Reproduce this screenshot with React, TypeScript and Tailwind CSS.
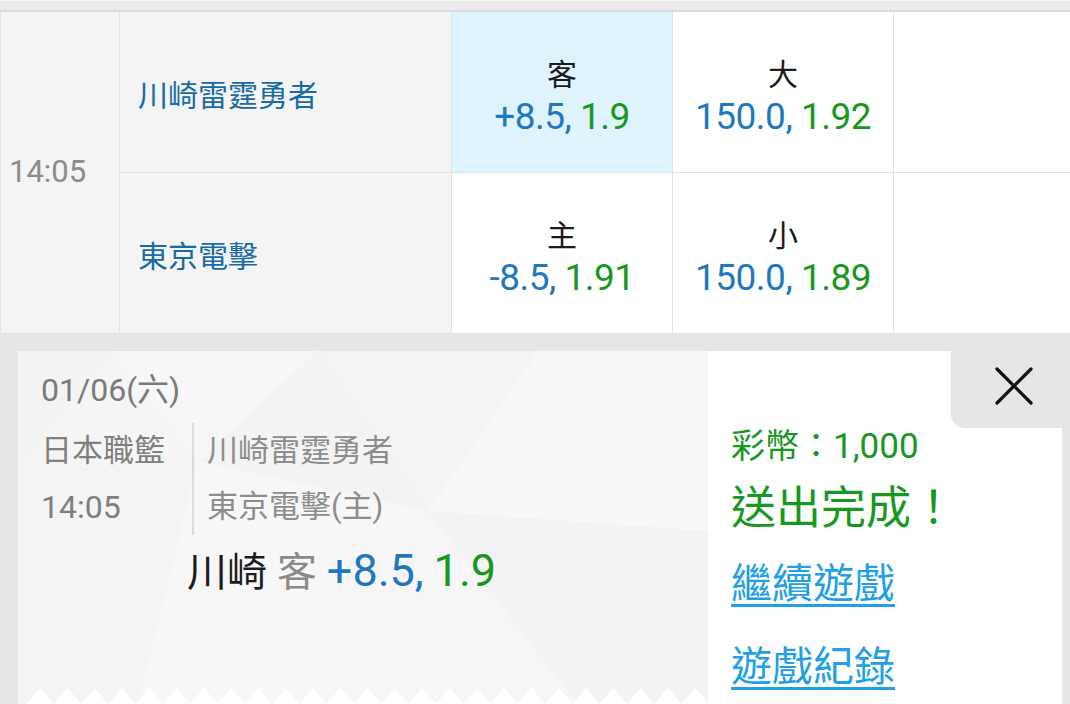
import React from 'react';

const FONT = "font-['Roboto','Noto_Sans_CJK_TC',sans-serif]";

function Odds({ label, line, price, active }: { label: string; line: string; price: string; active?: boolean }) {
    return (
        <div
            className={`flex flex-col items-center justify-center pt-[10px] border-r border-b border-[#dde3e7] ${
                active ? 'bg-[#dff3fc] border-[#c4dfee]' : 'bg-white'
            }`}
        >
            <div className="text-[30px] leading-[40px] text-[#1a1a1a]">{label}</div>
            <div className="text-[37px] leading-[44px] tracking-[-0.5px]">
                <span className="text-[#1f78bd]">{line},</span>{' '}
                <span className="text-[#18981f]">{price}</span>
            </div>
        </div>
    );
}

function LowPoly() {
    // faint triangle pattern behind the ticket
    return (
        <svg className="absolute inset-0" width="690" height="353" viewBox="0 0 690 353">
            <rect width="690" height="353" fill="#f5f5f5" />
            <polygon points="0,0 95,0 0,120" fill="#f3f3f3" />
            <polygon points="95,0 300,0 180,110" fill="#f7f7f7" />
            <polygon points="300,0 520,0 410,160" fill="#f4f4f4" />
            <polygon points="520,0 690,0 690,180" fill="#f6f6f6" />
            <polygon points="0,120 180,110 120,353 0,353" fill="#f4f4f4" />
            <polygon points="180,110 410,160 270,353 120,353" fill="#f7f7f7" />
            <polygon points="410,160 690,180 690,353 560,353" fill="#f3f3f3" />
            <polygon points="410,160 560,353 270,353" fill="#f6f6f6" />
            <polygon points="520,0 410,160 690,180" fill="#f8f8f8" />
            <polygon points="180,110 300,0 410,160" fill="#f2f2f2" opacity="0.6" />
        </svg>
    );
}

function Zigzag() {
    const pts: string[] = ['0,16'];
    const step = 27.3;
    for (let x = 8.4, i = 0; x < 700; x += step / 2, i++) {
        pts.push(`${x.toFixed(1)},${i % 2 === 0 ? 16 : 0}`);
    }
    pts.push('690,16');
    return (
        <svg className="absolute left-0 bottom-0" width="690" height="16" viewBox="0 0 690 16">
            <polygon points={pts.join(' ')} fill="#ffffff" />
        </svg>
    );
}

export default function App() {
    return (
        <div className={`w-[1070px] h-[704px] overflow-hidden bg-[#e6e6e6] ${FONT}`}>
            {/* top strip */}
            <div className="h-[12px] bg-[#ececec] border-t border-[#f6f6f6] border-b-2 border-b-[#d6dde3]" />

            {/* match rows */}
            <div className="grid grid-cols-[120px_332px_221px_221px_1fr] grid-rows-[161px_161px]">
                <div className="row-span-2 flex items-center pl-[8px] bg-[#f4f4f4] border-l border-r border-b border-[#dde3e7] text-[31px] text-[#8c8c8c]">
                    14:05
                </div>
                <div className="flex items-center pl-[18px] pt-[7px] bg-[#f4f4f4] border-r border-b border-[#dde3e7] text-[30px] text-[#196ba3]">
                    川崎雷霆勇者
                </div>
                <Odds label="客" line="+8.5" price="1.9" active />
                <Odds label="大" line="150.0" price="1.92" />
                <div className="bg-white border-b border-[#dde3e7]" />

                <div className="flex items-center pl-[18px] pt-[7px] bg-[#f4f4f4] border-r border-b border-[#dde3e7] text-[30px] text-[#196ba3]">
                    東京電擊
                </div>
                <Odds label="主" line="-8.5" price="1.91" />
                <Odds label="小" line="150.0" price="1.89" />
                <div className="bg-white border-b border-[#dde3e7]" />
            </div>

            {/* bet ticket */}
            <div className="pt-[17px] pl-[18px] pr-[8px]">
                <div className="flex h-[353px]">
                    <div className="relative w-[690px] overflow-hidden">
                        <LowPoly />
                        <Zigzag />
                        <div className="relative pl-[23px] pt-[21px]">
                            <div className="text-[32px] leading-[36px] text-[#7a7a7a]">01/06(六)</div>
                            <div className="flex mt-[15px]">
                                <div className="w-[153px] border-r-2 border-[#dcdcdc] text-[31px] leading-[56px] text-[#7f7f7f]">
                                    <div>日本職籃</div>
                                    <div className="text-[32px]">14:05</div>
                                </div>
                                <div className="pl-[13px] text-[31px] leading-[56px] text-[#8d8d8d]">
                                    <div>川崎雷霆勇者</div>
                                    <div>東京電擊(主)</div>
                                </div>
                            </div>
                            <div className="mt-[9px] ml-[146px] text-[40px] leading-[54px]">
                                <span className="text-[#1c1c1c]">川崎</span>{' '}
                                <span className="text-[#8a8a8a]">客</span>{' '}
                                <span className="text-[45px] text-[#1f78bd]">+8.5,</span>{' '}
                                <span className="text-[45px] text-[#18981f]">1.9</span>
                            </div>
                        </div>
                    </div>

                    <div className="flex-1 bg-white flex flex-col">
                        <div className="flex justify-end">
                            <button className="w-[111px] h-[77px] bg-[#e6e6e6] rounded-bl-[14px] flex justify-end items-start pt-[16px] pr-[29px]">
                                <svg width="38" height="38" viewBox="0 0 38 38">
                                    <path d="M2 2 L36 36 M36 2 L2 36" stroke="#111" strokeWidth="3.2" strokeLinecap="round" />
                                </svg>
                            </button>
                        </div>
                        <div className="pl-[23px]">
                            <div className="text-[34px] leading-[36px] text-[#18981f]">
                                彩幣：<span className="text-[35px]">1,000</span>
                            </div>
                            <div className="mt-[18px] text-[45px] leading-[52px] text-[#18981f]">送出完成！</div>
                            <div className="mt-[25px] text-[41px] leading-[48px] text-[#22a0e6] underline decoration-[3px] underline-offset-[6px]">
                                繼續遊戲
                            </div>
                            <div className="mt-[35px] text-[41px] leading-[48px] text-[#22a0e6] underline decoration-[3px] underline-offset-[6px]">
                                遊戲紀錄
                            </div>
                        </div>
                    </div>
                </div>
            </div>
        </div>
    );
}
